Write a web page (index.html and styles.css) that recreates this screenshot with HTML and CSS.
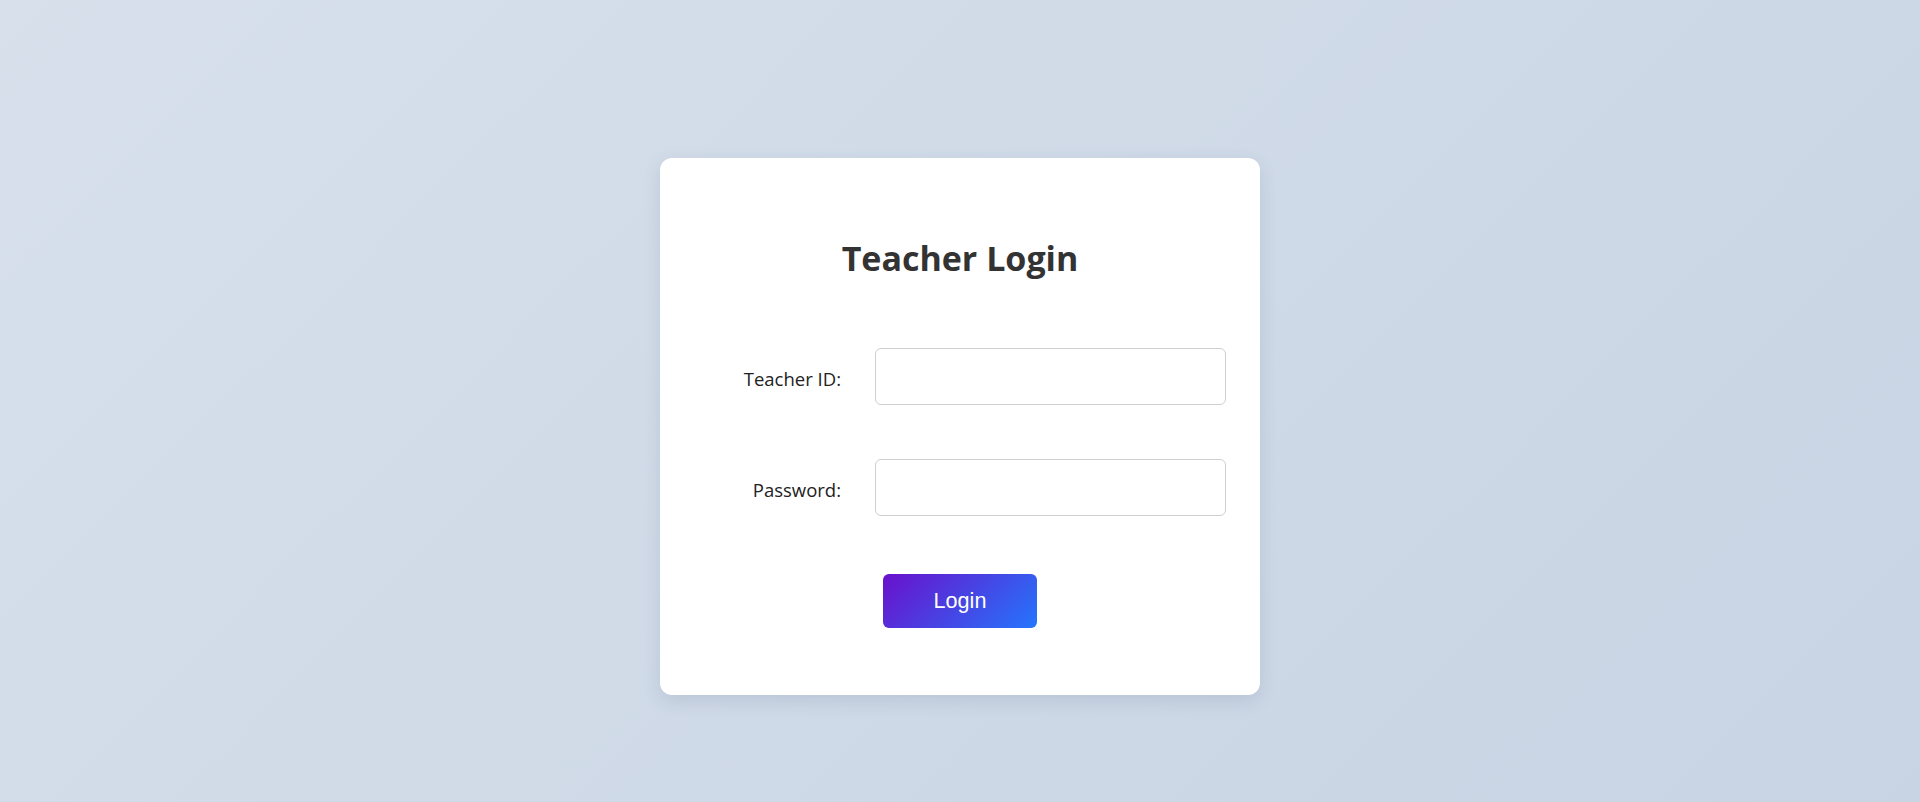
FILE: index.html
```html
<!DOCTYPE html>
<html lang="en">
<head>
<meta charset="utf-8">
<title>Teacher Login</title>
<link rel="stylesheet" href="styles.css">
</head>
<body>
<main class="page">
  <section class="card">
    <h2 class="title">Teacher Login</h2>
    <form class="form">
      <div class="row">
        <label class="label" for="tid">Teacher ID:</label>
        <input class="input" id="tid" type="text">
      </div>
      <div class="row">
        <label class="label" for="pwd">Password:</label>
        <input class="input" id="pwd" type="password">
      </div>
      <div class="actions">
        <button class="btn" type="button">Login</button>
      </div>
    </form>
  </section>
</main>
</body>
</html>
```
FILE: styles.css
```css
* { box-sizing: border-box; }
html, body { margin: 0; height: 100%; }
body {
  background: linear-gradient(135deg, #d7e0eb 0%, #c8d4e4 100%);
  font-family: "Open Sans", "Noto Sans", sans-serif;
  overflow: hidden;
}
.page {
  display: flex;
  justify-content: center;
  padding-top: 158px;
}
.card {
  width: 600px;
  background: #fff;
  border-radius: 12px;
  box-shadow: 0 6px 18px rgba(60, 80, 110, 0.14);
  padding: 77px 34px 67px;
}
.title {
  margin: 0;
  text-align: center;
  font-size: 34px;
  line-height: 46px;
  font-weight: 700;
  color: #333;
}
.form {
  display: flex;
  flex-direction: column;
  gap: 54px;
  margin-top: 67px;
}
.row {
  display: grid;
  grid-template-columns: 147px 351px;
  column-gap: 34px;
  align-items: center;
}
.label {
  text-align: right;
  font-size: 18.5px;
  color: #222;
  padding-top: 3px;
}
.input {
  height: 57px;
  width: 351px;
  border: 1px solid #cfcfcf;
  border-radius: 6px;
  background: #fff;
  outline: none;
  padding: 0 12px;
  font-size: 18px;
}
.actions {
  display: flex;
  justify-content: center;
  margin-top: 4px;
}
.btn {
  width: 154px;
  height: 54px;
  border: none;
  border-radius: 6px;
  background: linear-gradient(135deg, #6a11cb 0%, #2575fc 100%);
  color: #fff;
  font-family: "Liberation Sans", Arial, sans-serif;
  font-size: 21.6px;
  cursor: pointer;
}
```
